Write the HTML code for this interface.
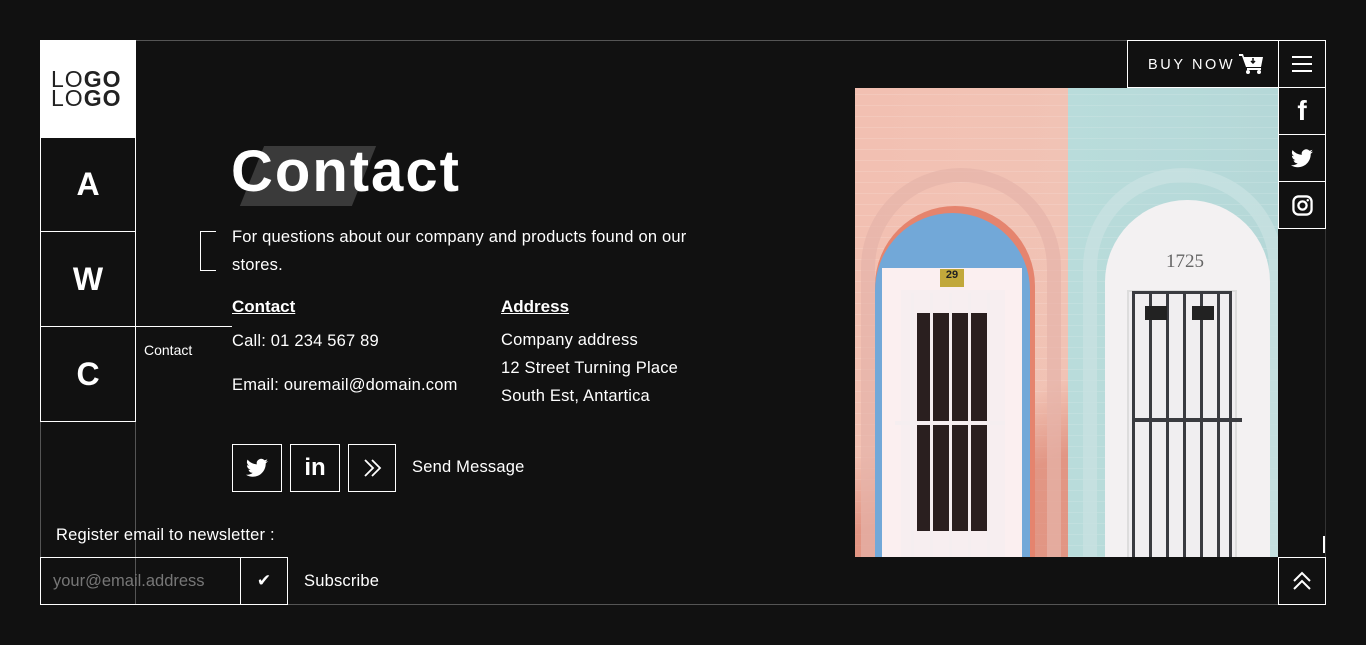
<!DOCTYPE html>
<html><head><meta charset="utf-8"><style>
*{margin:0;padding:0;box-sizing:border-box}
body{width:1366px;height:645px;background:#111;position:relative;overflow:hidden;font-family:"Liberation Sans",sans-serif;color:#fff}
.a{position:absolute}
.box{position:absolute;border:1px solid #fff}
.nav{font-weight:bold;font-size:32px;display:flex;align-items:center;justify-content:center}
.t{font-size:16.5px;color:#fff;letter-spacing:.2px}
</style></head><body>
<div class="a" style="left:136px;top:40px;width:1190px;height:1px;background:#555"></div>
<div class="a" style="left:288px;top:604px;width:990px;height:1px;background:#555"></div>
<div class="a" style="left:40px;top:421px;width:1px;height:184px;background:#555"></div>
<div class="a" style="left:135px;top:421px;width:1px;height:184px;background:#555"></div>
<div class="a" style="left:1325px;top:228px;width:1px;height:330px;background:#333"></div>
<div class="a" style="left:40px;top:40px;width:96px;height:97px;background:#fff;color:#222;font-size:23px;line-height:19px;padding:30px 0 0 11px;letter-spacing:1px"><span style="font-weight:300">LO</span><b>GO</b><br><span style="font-weight:300">LO</span><b>GO</b></div>
<div class="box nav" style="left:40px;top:137px;width:96px;height:95px">A</div>
<div class="box nav" style="left:40px;top:231px;width:96px;height:96px">W</div>
<div class="box nav" style="left:40px;top:326px;width:96px;height:96px">C</div>
<div class="a" style="left:135px;top:326px;width:97px;height:1px;background:#fff"></div>
<div class="a" style="left:144px;top:342px;font-size:14px">Contact</div>
<div class="a" style="left:252px;top:146px;width:112px;height:60px;background:#3a3a3a;transform:skewX(-22deg)"></div>
<div class="a" style="left:231px;top:138px;font-size:58px;font-weight:bold;letter-spacing:2px">Contact</div>
<div class="a" style="left:200px;top:231px;width:16px;height:40px;border:1px solid #fff;border-right:none"></div>
<div class="a t" style="left:232px;top:223px;width:490px;line-height:28px">For questions about our company and products found on our stores.</div>
<div class="a" style="left:232px;top:297px;font-weight:bold;text-decoration:underline;font-size:17px">Contact</div>
<div class="a" style="left:501px;top:297px;font-weight:bold;text-decoration:underline;font-size:17px">Address</div>
<div class="a t" style="left:232px;top:332px">Call: 01 234 567 89</div>
<div class="a t" style="left:232px;top:376px">Email: ouremail@domain.com</div>
<div class="a t" style="left:501px;top:332px;line-height:28px;margin-top:-6px">Company address<br>12 Street Turning Place<br>South Est, Antartica</div>
<div class="box" style="left:232px;top:444px;width:50px;height:48px"><svg class="a" style="left:13px;top:13px" width="22" height="20" viewBox="0 0 24 20"><path fill="#fff" d="M24 2.4a10 10 0 0 1-2.8.8A5 5 0 0 0 23.3.4a10 10 0 0 1-3.1 1.2A4.9 4.9 0 0 0 11.8 6 14 14 0 0 1 1.7.9a4.9 4.9 0 0 0 1.5 6.6 4.9 4.9 0 0 1-2.2-.6 4.9 4.9 0 0 0 3.9 4.9 4.9 4.9 0 0 1-2.2.1 4.9 4.9 0 0 0 4.6 3.4A9.9 9.9 0 0 1 0 17.3 14 14 0 0 0 7.5 19.5c9 0 14-7.5 14-14v-.6A10 10 0 0 0 24 2.4z"/></svg></div>
<div class="box" style="left:290px;top:444px;width:50px;height:48px;font-weight:bold;font-size:24px;text-align:center;line-height:46px">in</div>
<div class="box" style="left:348px;top:444px;width:48px;height:48px"><svg class="a" style="left:14px;top:14px" width="20" height="18" viewBox="0 0 20 18"><path d="M2 1l8 8-8 8M9 1l8 8-8 8" stroke="#fff" stroke-width="1.8" fill="none"/></svg></div>
<div class="a t" style="left:412px;top:458px">Send Message</div>
<div class="a t" style="left:56px;top:526px">Register email to newsletter :</div>
<div class="box" style="left:40px;top:557px;width:201px;height:48px;color:#777;font-size:16.5px;padding:14px 0 0 12px">your@email.address</div>
<div class="box" style="left:240px;top:557px;width:48px;height:48px;text-align:center;line-height:46px;font-size:17px">✔</div>
<div class="a t" style="left:304px;top:572px">Subscribe</div>
<div class="a" style="left:855px;top:88px;width:423px;height:469px;overflow:hidden;background:linear-gradient(90deg,#f2c0b2 0,#f1c3b5 213px,#b9dcdb 213px,#b5d8d8 100%)">
 <div class="a" style="left:0;top:0;width:100%;height:100%;background:repeating-linear-gradient(0deg,rgba(255,255,255,.12) 0 1px,transparent 1px 11px)"></div>
 <div class="a" style="left:0;top:290px;width:213px;height:180px;background:linear-gradient(160deg,transparent 30%,rgba(215,120,100,.6) 60%)"></div>
 <div class="a" style="left:6px;top:80px;width:200px;height:420px;border-radius:100px 100px 0 0;border:14px solid rgba(230,180,170,.7)"></div>
 <div class="a" style="left:20px;top:118px;width:160px;height:360px;border-radius:80px 80px 0 0;background:#e5846e"></div>
 <div class="a" style="left:20px;top:125px;width:155px;height:360px;border-radius:78px 78px 0 0;background:#72a8d8"></div>
 <div class="a" style="left:27px;top:180px;width:140px;height:300px;background:#fbeff0"></div>
 <div class="a" style="left:85px;top:181px;width:24px;height:18px;background:#c2a83b;font-size:11px;color:#222;text-align:center;font-weight:bold">29</div>
 <div class="a" style="left:46px;top:202px;width:104px;height:270px;background:#f7eef0"></div>
 <div class="a" style="left:62px;top:225px;width:70px;height:218px;background:#2a1f1f"></div>
 <div class="a" style="left:56px;top:205px;width:90px;height:265px;background:repeating-linear-gradient(90deg,#f5eef0 0 3px,transparent 3px 19px)"></div>
 <div class="a" style="left:40px;top:333px;width:110px;height:4px;background:#f5eef0"></div>
 <div class="a" style="left:228px;top:80px;width:200px;height:420px;border-radius:100px 100px 0 0;border:14px solid rgba(200,225,225,.8)"></div>
 <div class="a" style="left:250px;top:112px;width:165px;height:370px;border-radius:82px 82px 0 0;background:#f3f1f2"></div>
 <div class="a" style="left:255px;top:163px;font-size:19px;color:#666;font-family:'Liberation Serif',serif;width:150px;text-align:center">1725</div>
 <div class="a" style="left:272px;top:202px;width:110px;height:270px;border:2px solid #ddd;background:#f0eef0"></div>
 <div class="a" style="left:277px;top:203px;width:100px;height:270px;border:3px solid #3a3b40;border-bottom:none;background:repeating-linear-gradient(90deg,transparent 0 14px,#3a3b40 14px 17px)"></div>
 <div class="a" style="left:290px;top:218px;width:22px;height:14px;background:#222"></div>
 <div class="a" style="left:337px;top:218px;width:22px;height:14px;background:#222"></div>
 <div class="a" style="left:277px;top:330px;width:110px;height:4px;background:#3a3b40"></div>
</div>
<div class="box" style="left:1127px;top:40px;width:152px;height:48px;font-size:14.5px;letter-spacing:2.6px;padding:16px 0 0 20px">BUY NOW</div>
<svg class="a" style="left:1239px;top:54px" width="24" height="20" viewBox="0 0 24 20"><path fill="#fff" d="M0 0h4l1 3h19l-2 10H7L3 2H0z M8 14h14v2H8z"/><circle cx="9" cy="18" r="2" fill="#fff"/><circle cx="20" cy="18" r="2" fill="#fff"/><path d="M14 4v5M12 7l2 2 2-2" stroke="#111" stroke-width="1.5" fill="none"/></svg>
<div class="box" style="left:1278px;top:40px;width:48px;height:48px"><div class="a" style="left:13px;top:15px;width:20px;height:2px;background:#fff;box-shadow:0 7px 0 #fff,0 14px 0 #fff"></div></div>
<div class="box" style="left:1278px;top:87px;width:48px;height:48px;font-weight:bold;font-size:28px;text-align:center;line-height:46px">f</div>
<div class="box" style="left:1278px;top:134px;width:48px;height:48px"><svg class="a" style="left:12px;top:14px" width="22" height="19" viewBox="0 0 24 20"><path fill="#fff" d="M24 2.4a10 10 0 0 1-2.8.8A5 5 0 0 0 23.3.4a10 10 0 0 1-3.1 1.2A4.9 4.9 0 0 0 11.8 6 14 14 0 0 1 1.7.9a4.9 4.9 0 0 0 1.5 6.6 4.9 4.9 0 0 1-2.2-.6 4.9 4.9 0 0 0 3.9 4.9 4.9 4.9 0 0 1-2.2.1 4.9 4.9 0 0 0 4.6 3.4A9.9 9.9 0 0 1 0 17.3 14 14 0 0 0 7.5 19.5c9 0 14-7.5 14-14v-.6A10 10 0 0 0 24 2.4z"/></svg></div>
<div class="box" style="left:1278px;top:181px;width:48px;height:48px"><svg class="a" style="left:13px;top:13px" width="21" height="21" viewBox="0 0 22 22"><rect x="1.5" y="1.5" width="19" height="19" rx="5.5" stroke="#fff" stroke-width="2.4" fill="none"/><circle cx="11" cy="11" r="4.3" stroke="#fff" stroke-width="2.4" fill="none"/><circle cx="16.5" cy="5.5" r="1.3" fill="#fff"/></svg></div>
<div class="a" style="left:1323px;top:536px;width:2px;height:17px;background:#fff"></div>
<div class="box" style="left:1278px;top:557px;width:48px;height:48px"><svg class="a" style="left:13px;top:13px" width="20" height="20" viewBox="0 0 20 20"><path d="M2 10l8-8 8 8M2 18l8-8 8 8" stroke="#fff" stroke-width="2" fill="none"/></svg></div>
</body></html>
